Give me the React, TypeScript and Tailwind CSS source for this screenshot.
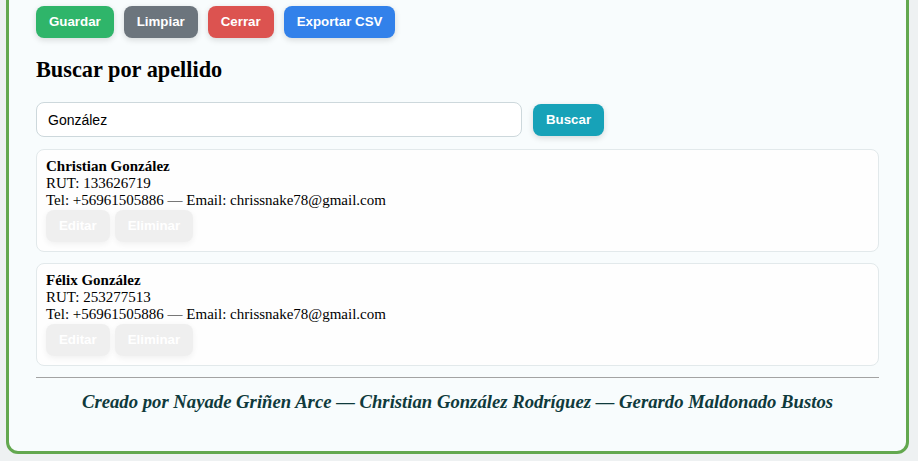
import React from "react";

const sans = { fontFamily: '"Liberation Sans", Arial, sans-serif' };
const serif = { fontFamily: '"Liberation Serif", "Times New Roman", serif' };

function Btn({ label, color }: { label: string; color: string }) {
  return (
    <button
      className={`h-[32px] px-[13px] rounded-[8px] text-white font-bold text-[13.3px] shadow-[0_2px_6px_rgba(0,0,0,0.14)] ${color}`}
      style={sans}
    >
      {label}
    </button>
  );
}

function Card({ name, rut }: { name: string; rut: string }) {
  return (
    <div className="border border-[#e2e9eb] rounded-[8px] bg-[#fefefe] pl-[9px] pr-[9px] pt-[8px] pb-[9px]">
      <div className="text-[15px] leading-[17px] text-black" style={serif}>
        <div className="font-bold">{name}</div>
        <div>RUT: {rut}</div>
        <div>Tel: +56961505886 — Email: chrissnake78@gmail.com</div>
      </div>
      <div className="flex gap-[5px] mt-[1px]">
        <button
          className="h-[32px] px-[13px] rounded-[8px] bg-[#efefef] text-white font-bold text-[13.3px] shadow-[0_2px_6px_rgba(0,0,0,0.06)]"
          style={sans}
        >
          Editar
        </button>
        <button
          className="h-[32px] px-[13px] rounded-[8px] bg-[#efefef] text-white font-bold text-[13.3px] shadow-[0_2px_6px_rgba(0,0,0,0.06)]"
          style={sans}
        >
          Eliminar
        </button>
      </div>
    </div>
  );
}

export default function App() {
  return (
    <div className="w-[918px] h-[461px] overflow-hidden bg-[#eef1f2] pb-[7px]">
      <div className="ml-[6px] mr-[9px] -mt-[40px] border-[3px] border-[#63a84f] rounded-[12px] bg-[#f8fcfd] px-[27px] pt-[43px] pb-[38px]">
        <div className="flex gap-[10px]">
          <Btn label="Guardar" color="bg-[#2fb56a]" />
          <Btn label="Limpiar" color="bg-[#6c757d]" />
          <Btn label="Cerrar" color="bg-[#dc5350]" />
          <Btn label="Exportar CSV" color="bg-[#3281ea]" />
        </div>
        <h2 className="mt-[20px] text-[22.3px] leading-[24px] font-bold text-black" style={serif}>
          Buscar por apellido
        </h2>
        <div className="mt-[20px] flex items-center gap-[11px]">
          <input
            className="w-[486px] h-[35px] border border-[#cdd8dc] rounded-[8px] bg-white pl-[11px] text-[14px] text-black outline-none"
            style={sans}
            defaultValue="González"
          />
          <button
            className="h-[32px] px-[13px] rounded-[8px] bg-[#17a2b8] text-white font-bold text-[13.3px] shadow-[0_2px_6px_rgba(0,0,0,0.14)]"
            style={sans}
          >
            Buscar
          </button>
        </div>
        <div className="mt-[12px] flex flex-col gap-[11px]">
          <Card name="Christian González" rut="133626719" />
          <Card name="Félix González" rut="253277513" />
        </div>
        <div className="mt-[11px] border-t border-[#a3a3a3]" />
        <p className="mt-[13px] text-center text-[18.7px] leading-[22px] font-bold italic text-[#0f3a3c]" style={serif}>
          Creado por Nayade Griñen Arce — Christian González Rodríguez — Gerardo Maldonado Bustos
        </p>
      </div>
    </div>
  );
}
